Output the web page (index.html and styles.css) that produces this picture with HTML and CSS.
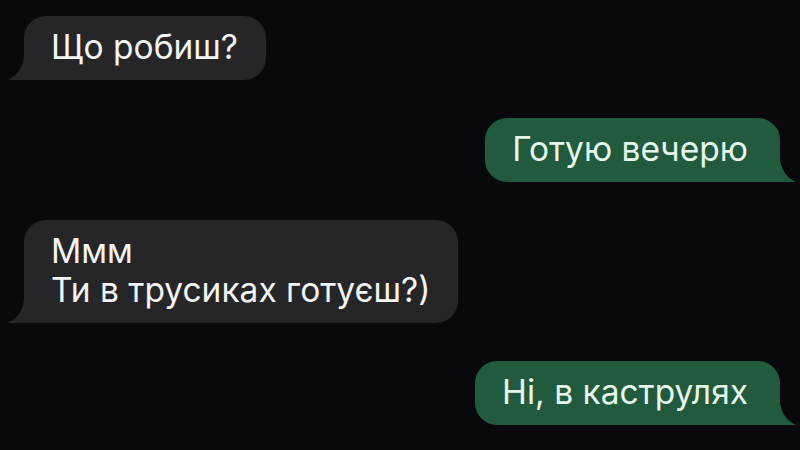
FILE: index.html
```html
<!DOCTYPE html>
<html lang="uk">
<head>
    <meta charset="UTF-8">
    <meta name="viewport" content="width=device-width, initial-scale=1.0">
    <title>Чат</title>
    <link rel="stylesheet" href="styles.css">
</head>
<body>
    <div class="chat">
        <div class="msg in">
            <p>Що робиш?</p>
            <svg class="tail" viewBox="0 0 40 26"><path d="M16 0 C16 13 10 21 0 26 L40 26 L40 0 Z"/></svg>
        </div>
        <div class="msg out">
            <p>Готую вечерю</p>
            <svg class="tail" viewBox="0 0 40 26"><path d="M24 0 C24 13 30 21 40 26 L0 26 L0 0 Z"/></svg>
        </div>
        <div class="msg in">
            <p>Ммм<br>Ти в трусиках готуєш?)</p>
            <svg class="tail" viewBox="0 0 40 26"><path d="M16 0 C16 13 10 21 0 26 L40 26 L40 0 Z"/></svg>
        </div>
        <div class="msg out">
            <p>Ні, в каструлях</p>
            <svg class="tail" viewBox="0 0 40 26"><path d="M24 0 C24 13 30 21 40 26 L0 26 L0 0 Z"/></svg>
        </div>
    </div>
</body>
</html>
```

FILE: styles.css
```css
body, html{
    height: 100%;
    width: 100%;
    margin: 0;
    background-color: #09080c;
}
.chat{
    display: flex;
    flex-direction: column;
    gap: 38px;
    padding: 16px 20px 0 24px;
    font-family: 'Inter', 'Noto Sans', sans-serif;
}
.msg{
    position: relative;
    border-radius: 22px;
    padding: 12px 28px 13px 27px;
}
.msg p{
    margin: 0;
    font-size: 33.5px;
    line-height: 39px;
    white-space: nowrap;
}
.in{
    align-self: flex-start;
    background-color: #262628;
    color: #f4f4f4;
}
.out{
    align-self: flex-end;
    background-color: #225a3e;
    color: #e6f6ea;
}
.out p{
    margin-right: 4px;
}
.tail{
    position: absolute;
    bottom: 0;
    width: 40px;
    height: 26px;
}
.in .tail{
    left: -16px;
    fill: #262628;
}
.out .tail{
    right: -16px;
    fill: #225a3e;
}
```
